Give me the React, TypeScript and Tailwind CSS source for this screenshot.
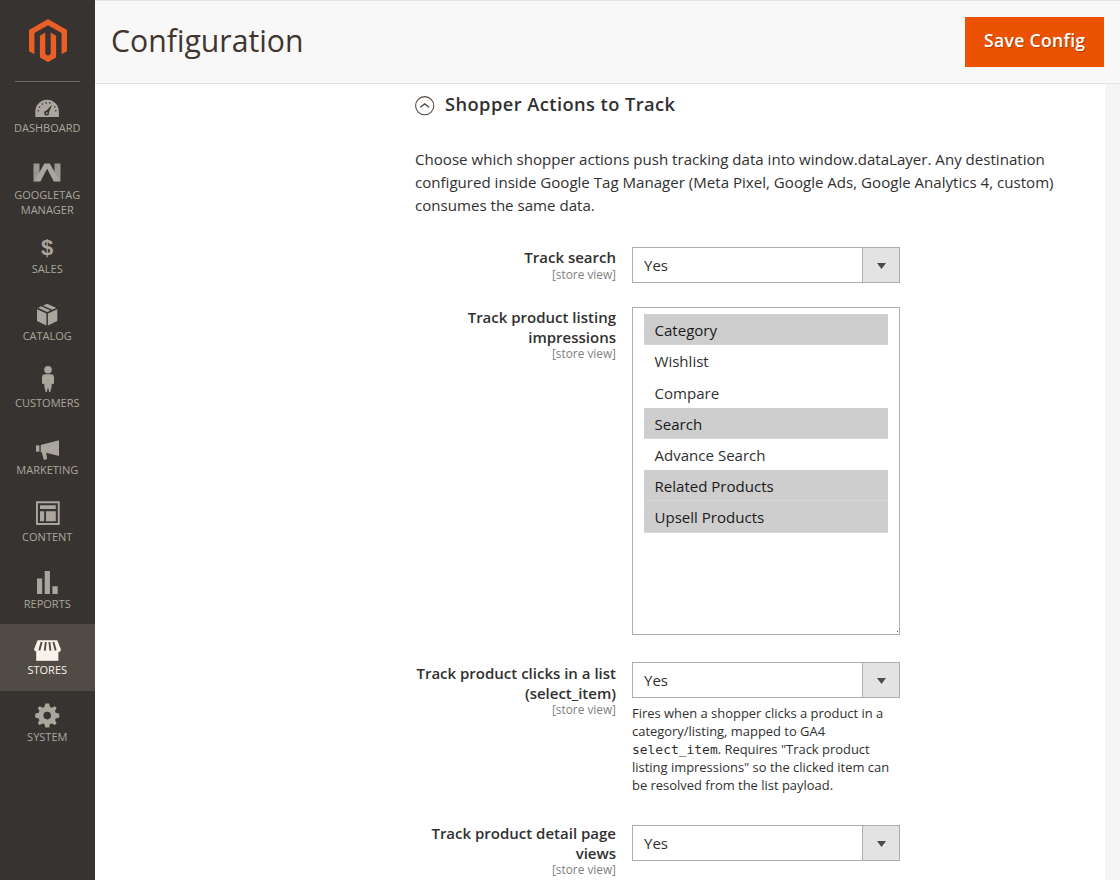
import type { ReactNode } from "react";

interface MenuItem {
  label: string;
  icon: ReactNode;
  active?: boolean;
  tall?: boolean;
}

interface ListOption {
  label: string;
  selected: boolean;
}

const MENU: MenuItem[] = [
  {
    label: "Dashboard",
    icon: (
      <>
        <path d="M8.3 27V21.6a11.8 11.8 0 0 1 23.6 0V27Z" />
        <g fill="#373330">
          <path d="M25.2 14.6 21.9 22.6a2.4 2.4 0 1 1-2.6-1.8Z" />
          <circle cx="11.4" cy="20.8" r="0.8" />
          <circle cx="12.6" cy="17" r="0.8" />
          <circle cx="15.4" cy="14" r="0.8" />
          <circle cx="19" cy="12.9" r="0.8" />
          <circle cx="22.8" cy="12.9" r="0.8" />
          <circle cx="27.8" cy="17" r="0.8" />
          <circle cx="28.8" cy="20.8" r="0.8" />
        </g>
        <circle cx="19.8" cy="23.1" r="0.9" />
      </>
    ),
  },
  {
    label: "GoogleTag Manager",
    tall: true,
    icon: (
      <>
        <path d="M6.5 6.5h6v13L7.5 24.5h-1ZM27.5 6.5h6v18h-1l-5-5Z" fill="#9a9690" />
        <path d="M17.4 6.5h5.4L33 24.5h-6.2L20.1 11.8 13.4 24.5H7.2Z" />
      </>
    ),
  },
  {
    label: "Sales",
    icon: (
      <text x="20.2" y="24.2" textAnchor="middle" fontSize="22" fontWeight="700" fontFamily="Liberation Sans, sans-serif">
        $
      </text>
    ),
  },
  {
    label: "Catalog",
    icon: (
      <>
        <path d="M10 11.2 19.4 15.4V27.6L10 22.9ZM30.3 11.2 20.9 15.4V27.6L30.3 22.9Z" />
        <path d="M11 9.7 14.2 8.3 23.4 12.6 20.2 14.1ZM16 7.5 20.2 5.7 29.4 9.9 25.2 11.8Z" />
      </>
    ),
  },
  {
    label: "Customers",
    icon: (
      <>
        <circle cx="21" cy="4.7" r="3.8" />
        <path d="M17.5 9.3h7a2.6 2.6 0 0 1 2.5 2.5v6.4a1.2 1.2 0 0 1-2.2.3L24.6 22l-1.3 5h-1.1L21 22.5 19.8 27h-1.1l-1.3-5-.2-3.5a1.2 1.2 0 0 1-2.2-.3v-6.4a2.6 2.6 0 0 1 2.5-2.5Z" />
      </>
    ),
  },
  {
    label: "Marketing",
    icon: (
      <>
        <path d="M9 13.4h3.4v6.3H9Z" />
        <path d="M13.7 12.9 32 8.3v15.8L19.2 20.7l.9 6.4-3.2.8-2.2-7.6h-1Z" />
      </>
    ),
  },
  {
    label: "Content",
    icon: (
      <>
        <path d="M9 2.3h23.7V26H9Zm1.9 1.9v19.9h19.9V4.2Z" fillRule="evenodd" />
        <path d="M13 6.2h15.8v3.9H13ZM13 12.2h4.2v10H13ZM19 12.2h9.8v10H19Z" />
      </>
    ),
  },
  {
    label: "Reports",
    icon: <path d="M10 12.5h5.2V28H10ZM17.7 5h5.2v23h-5.2ZM25.4 20.2h5.3V28h-5.3Z" />,
  },
  {
    label: "Stores",
    active: true,
    icon: (
      <>
        <path d="M9.2 18h22.2v10.8H9.2Z" />
        <path d="M10.6 8.2h19.6l3.8 9.2a2.7 2.7 0 0 1-5.1 1.2 3 3 0 0 1-5.5 0 3.4 3.4 0 0 1-6.2 0 3 3 0 0 1-5.5 0A2.7 2.7 0 0 1 7 17.4Z" />
        <path
          d="M14.6 10 12.3 18.6M18.8 10 17.8 18.6M22.4 10l1 8.6M26.4 10l2.3 8.6"
          stroke="#514b45"
          strokeWidth="1.9"
        />
      </>
    ),
  },
  {
    label: "System",
    icon: (
      <g transform="translate(20.2 16.6)">
        <path
          fillRule="evenodd"
          d="M-1.9-12H1.9L2.8-8.5 4.5-7.8 7.6-9.4 9.4-7.6 7.8-4.5 8.5-2.8 12-1.9V1.9L8.5 2.8 7.8 4.5 9.4 7.6 7.6 9.4 4.5 7.8 2.8 8.5 1.9 12H-1.9L-2.8 8.5-4.5 7.8-7.6 9.4-9.4 7.6-7.8 4.5-8.5 2.8-12 1.9V-1.9L-8.5-2.8-7.8-4.5-9.4-7.6-7.6-9.4-4.5-7.8-2.8-8.5ZM0-3.8A3.8 3.8 0 1 0 0 3.8 3.8 3.8 0 1 0 0-3.8Z"
        />
      </g>
    ),
  },
];

const LISTING_OPTIONS: ListOption[] = [
  { label: "Category", selected: true },
  { label: "Wishlist", selected: false },
  { label: "Compare", selected: false },
  { label: "Search", selected: true },
  { label: "Advance Search", selected: false },
  { label: "Related Products", selected: true },
  { label: "Upsell Products", selected: true },
];

function Sidebar() {
  return (
    <aside className="w-[95px] shrink-0 bg-[#373330]">
      <div className="flex h-[82px] flex-col items-center">
        <svg className="mt-[19px] block h-[43px] w-[38px]" viewBox="0 0 38 43" fill="#eb5f26">
          <path d="M19 0 38 10.9V32.2L32.6 35.3V14L19 6.2 5.4 14V35.3L0 32.2V10.9Z" />
          <path d="M16.3 13.5V35.1L19 36.8 21.7 35.1V13.5L27.1 16.7V38.4L19 43 10.9 38.4V16.7Z" />
        </svg>
        <div className="mt-[19px] h-px w-[65px] bg-[#736963]" />
      </div>
      <nav>
        {MENU.map((item) => (
          <a
            key={item.label}
            className={`flex flex-col items-center pt-2 ${item.tall ? "h-[74.25px]" : "h-[66.9px]"} ${
              item.active ? "bg-[#514b45] text-[#f7f3eb]" : "text-[#aaa69d]"
            }`}
          >
            <svg className="mr-px block h-[30px] w-10 shrink-0" viewBox="0 0 40 30" fill="currentColor">
              {item.icon}
            </svg>
            <span className="mr-[0.5px] w-[80px] text-center text-[11px] leading-[15px] uppercase">{item.label}</span>
          </a>
        ))}
      </nav>
    </aside>
  );
}

function Select({ value }: { value: string }) {
  return (
    <div className="flex h-9 w-[268px] border border-[#adadad] bg-white">
      <span className="flex-1 pl-[11px] text-[15px] leading-[35px]">{value}</span>
      <span className="flex w-[37px] items-center justify-center border-l border-[#adadad] bg-[#e3e3e3] pt-[2px]">
        <svg className="h-[6px] w-[9px]" viewBox="0 0 9 6" fill="#514943">
          <path d="M0 0h9L4.5 6Z" />
        </svg>
      </span>
    </div>
  );
}

function MultiSelect({ options }: { options: ListOption[] }) {
  return (
    <div className="relative h-[328px] w-[268px] border border-[#adadad] bg-white px-[11px] pt-[6.5px]">
      {options.map((o) => (
        <div
          key={o.label}
          className={`h-[31.2px] pl-[10.5px] text-[15.05px] leading-[32px] ${
            o.selected ? "border-b border-[#d6d6d6] bg-[#cecece] text-[#1a1a1a]" : ""
          }`}
        >
          {o.label}
        </div>
      ))}
      <span className="absolute right-px bottom-[2px] size-px bg-[#555]" />
    </div>
  );
}

interface FieldProps {
  label: ReactNode;
  className: string;
  labelClassName?: string;
  children: ReactNode;
}

function Field({ label, className, labelClassName = "", children }: FieldProps) {
  return (
    <div className={`flex gap-4 ${className}`}>
      <div className={`w-[201px] text-right ${labelClassName}`}>
        <div className="text-[15px] leading-[20.3px] font-semibold">{label}</div>
        <div className="text-[11.85px] leading-[13px] text-[#808080]">[store view]</div>
      </div>
      <div className="w-[268px]">{children}</div>
    </div>
  );
}

export default function App() {
  return (
    <div className="flex h-[880px] w-[1120px] overflow-hidden bg-white font-['Open_Sans',sans-serif] text-[#303030]">
      <Sidebar />
      <div className="flex flex-1 flex-col">
        <header className="flex h-[84px] shrink-0 items-start justify-between border-y border-[#e3e3e3] bg-[#f8f8f8] pr-4 pl-4">
          <h1 className="mt-[19px] text-[30.2px] leading-[42px] text-[#41362f]">Configuration</h1>
          <button className="mt-4 h-[50px] w-[138.6px] bg-[#eb5202] pb-1 text-[17.6px] font-semibold tracking-[0.3px] text-white [text-shadow:1px_1px_0_rgba(0,0,0,0.25)]">
            Save Config
          </button>
        </header>
        <div className="flex flex-1">
          <main className="flex-1 pl-[320px]">
            <div className="mt-2 flex h-6 items-center gap-[10px]">
              <svg className="mt-[3px] size-5" viewBox="0 0 20 20" fill="none" stroke="#514943">
                <circle cx="9.7" cy="9.7" r="9.1" strokeWidth="1.1" />
                <path d="m5.3 11.2 4.4-3.3 4.4 3.3" strokeWidth="1.3" />
              </svg>
              <h2 className="text-[18.3px] leading-6 font-semibold tracking-[0.43px]">Shopper Actions to Track</h2>
            </div>
            <p className="mt-8 text-[15.09px] leading-[23px]">
              Choose which shopper actions push tracking data into window.dataLayer. Any destination
              <br />
              configured inside Google Tag Manager (Meta Pixel, Google Ads, Google Analytics 4, custom)
              <br />
              consumes the same data.
            </p>
            <Field label="Track search" className="mt-[30px] h-[59.7px]" labelClassName="pt-[0.3px]">
              <Select value="Yes" />
            </Field>
            <Field label="Track product listing impressions" className="h-[355.7px]">
              <MultiSelect options={LISTING_OPTIONS} />
            </Field>
            <Field
              className="h-[163px]"
              labelClassName="pt-[0.5px]"
              label={
                <>
                  Track product clicks in a list
                  <br />
                  (select_item)
                </>
              }
            >
              <Select value="Yes" />
              <p className="mt-[6px] text-[12.95px] leading-[18px] whitespace-nowrap">
                Fires when a shopper clicks a product in a
                <br />
                category/listing, mapped to GA4
                <br />
                <code className="font-['DejaVu_Sans_Mono',monospace] leading-none">select_item</code>. Requires "Track
                product
                <br />
                listing impressions" so the clicked item can
                <br />
                be resolved from the list payload.
              </p>
            </Field>
            <Field label="Track product detail page views" className="h-[60px]" labelClassName="-mt-[2.5px]">
              <Select value="Yes" />
            </Field>
          </main>
          <div className="w-[15px] bg-[#f5f5f5]" />
        </div>
      </div>
    </div>
  );
}
